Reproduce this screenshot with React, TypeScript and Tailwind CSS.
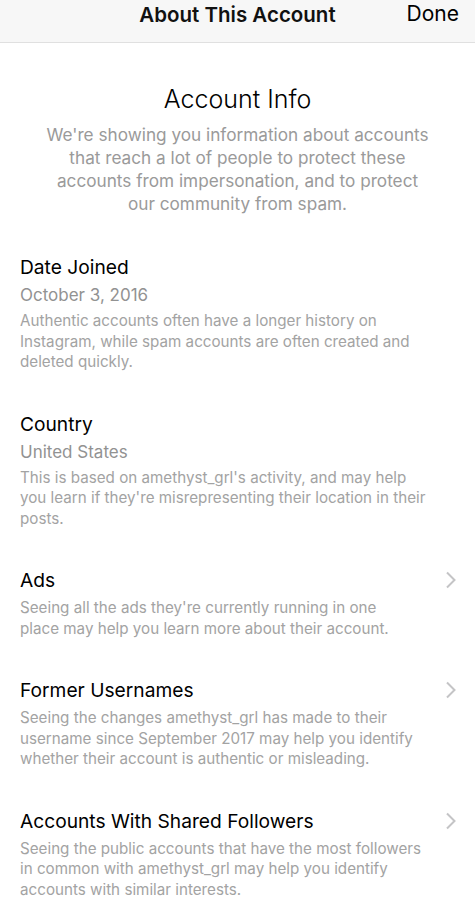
interface Section {
  title: string
  value?: string
  lines: string[]
  link?: boolean
}

const sections: Section[] = [
  {
    title: "Date Joined",
    value: "October 3, 2016",
    lines: [
      "Authentic accounts often have a longer history on",
      "Instagram, while spam accounts are often created and",
      "deleted quickly.",
    ],
  },
  {
    title: "Country",
    value: "United States",
    lines: [
      "This is based on amethyst_grl's activity, and may help",
      "you learn if they're misrepresenting their location in their",
      "posts.",
    ],
  },
  {
    title: "Ads",
    lines: [
      "Seeing all the ads they're currently running in one",
      "place may help you learn more about their account.",
    ],
    link: true,
  },
  {
    title: "Former Usernames",
    lines: [
      "Seeing the changes amethyst_grl has made to their",
      "username since September 2017 may help you identify",
      "whether their account is authentic or misleading.",
    ],
    link: true,
  },
  {
    title: "Accounts With Shared Followers",
    lines: [
      "Seeing the public accounts that have the most followers",
      "in common with amethyst_grl may help you identify",
      "accounts with similar interests.",
    ],
    link: true,
  },
]

function Chevron() {
  return (
    <svg width="12" height="18" viewBox="0 0 12 18" className="mt-[5px] shrink-0">
      <polyline points="2,1.5 9.5,9 2,16.5" fill="none" stroke="#c4c4c6" strokeWidth="2" />
    </svg>
  )
}

export default function App() {
  return (
    <div className="w-[475px] h-[922px] overflow-hidden bg-white font-['Inter',sans-serif]">
      <header className="relative h-[43px] bg-[#f7f7f7] border-b border-[#e0e0e0] flex justify-center">
        <h1 className="mt-[1px] text-[20.5px] leading-[28px] font-semibold text-[#111]">About This Account</h1>
        <button className="absolute right-[16px] top-[0px] text-[21px] leading-[28px] text-black">Done</button>
      </header>

      <div className="pt-[40px] px-[40px] text-center">
        <h2 className="text-[25px] leading-[32px] text-black font-light">Account Info</h2>
        <p className="mt-[8px] text-[17.2px] leading-[23px] text-[#9a9a9a]">
          We're showing you information about accounts
          <br />
          that reach a lot of people to protect these
          <br />
          accounts from impersonation, and to protect
          <br />
          our community from spam.
        </p>
      </div>

      <div className="pt-[38px] pl-[20px] pr-[18px] flex flex-col gap-[37px]">
        {sections.map((s) => (
          <div key={s.title} className="flex">
            <div className="flex-1">
              <div className="text-[19.2px] leading-[28px] text-black">{s.title}</div>
              {s.value && <div className="text-[17px] leading-[28px] text-[#929292]">{s.value}</div>}
              <p
                className={`${s.value ? "mt-[2px]" : "mt-[4px]"} text-[15.2px] leading-[20.5px] text-[#a3a3a3] whitespace-nowrap`}
              >
                {s.lines.map((l, i) => (
                  <span key={i} className="block">
                    {l}
                  </span>
                ))}
              </p>
            </div>
            {s.link && <Chevron />}
          </div>
        ))}
      </div>
    </div>
  )
}
